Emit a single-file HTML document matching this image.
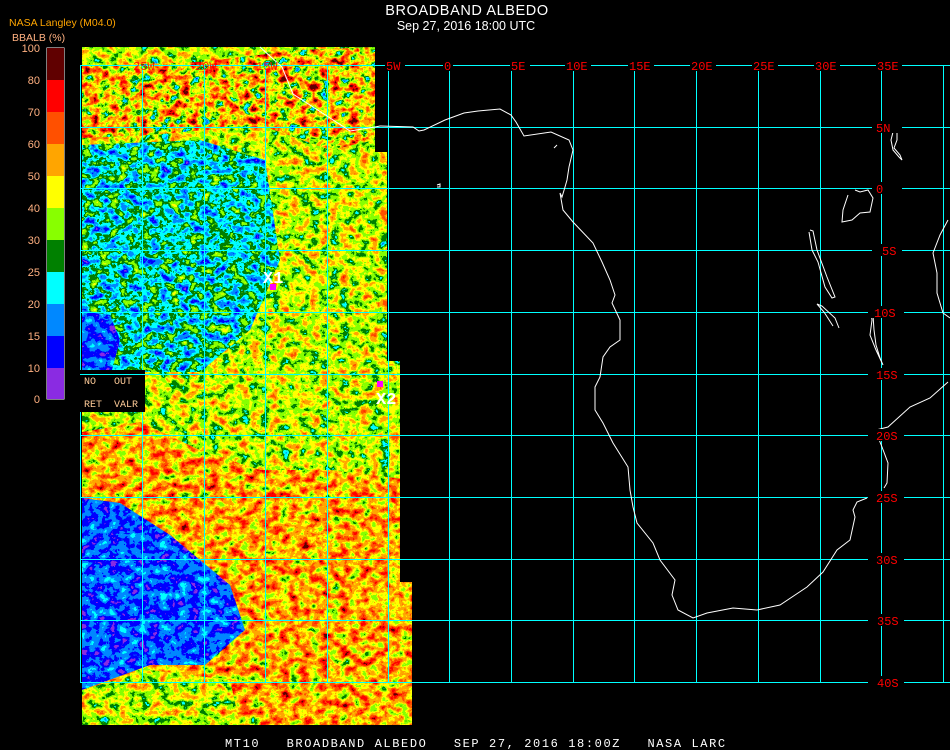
<!DOCTYPE html>
<html><head><meta charset="utf-8"><style>
html,body{margin:0;padding:0;background:#000;}
body{width:950px;height:750px;overflow:hidden;position:relative;}
svg{position:absolute;left:0;top:0;}
</style></head><body>
<svg width="950" height="750" viewBox="0 0 950 750" xmlns="http://www.w3.org/2000/svg">
<defs>
<filter id="t50" x="0" y="0" width="950" height="750" filterUnits="userSpaceOnUse" color-interpolation-filters="sRGB">
<feTurbulence type="fractalNoise" baseFrequency="0.1 0.12" numOctaves="4" seed="3"/>
<feColorMatrix type="matrix" values="0.75 0 0 0 0.17  0.75 0 0 0 0.17  0.75 0 0 0 0.17  0 0 0 0 1"/>
<feComponentTransfer>
<feFuncR type="discrete" tableValues="0.54 0 0 0 0 0.53 1 1 1 1 0.38"/>
<feFuncG type="discrete" tableValues="0.17 0 0.53 1 0.5 1 1 0.65 0.31 0 0"/>
<feFuncB type="discrete" tableValues="0.89 1 1 1 0 0 0 0 0 0 0"/>
</feComponentTransfer>
</filter>
<filter id="t63" x="0" y="0" width="950" height="750" filterUnits="userSpaceOnUse" color-interpolation-filters="sRGB">
<feTurbulence type="fractalNoise" baseFrequency="0.1 0.12" numOctaves="4" seed="4"/>
<feColorMatrix type="matrix" values="1.2 0 0 0 0.02  1.2 0 0 0 0.02  1.2 0 0 0 0.02  0 0 0 0 1"/>
<feComponentTransfer>
<feFuncR type="discrete" tableValues="0.54 0 0 0 0 0.53 1 1 1 1 0.38"/>
<feFuncG type="discrete" tableValues="0.17 0 0.53 1 0.5 1 1 0.65 0.31 0 0"/>
<feFuncB type="discrete" tableValues="0.89 1 1 1 0 0 0 0 0 0 0"/>
</feComponentTransfer>
</filter>
<filter id="t68" x="0" y="0" width="950" height="750" filterUnits="userSpaceOnUse" color-interpolation-filters="sRGB">
<feTurbulence type="fractalNoise" baseFrequency="0.1 0.12" numOctaves="4" seed="5"/>
<feColorMatrix type="matrix" values="0.8 0 0 0 0.27  0.8 0 0 0 0.27  0.8 0 0 0 0.27  0 0 0 0 1"/>
<feComponentTransfer>
<feFuncR type="discrete" tableValues="0.54 0 0 0 0 0.53 1 1 1 1 0.38"/>
<feFuncG type="discrete" tableValues="0.17 0 0.53 1 0.5 1 1 0.65 0.31 0 0"/>
<feFuncB type="discrete" tableValues="0.89 1 1 1 0 0 0 0 0 0 0"/>
</feComponentTransfer>
</filter>
<filter id="t33" x="0" y="0" width="950" height="750" filterUnits="userSpaceOnUse" color-interpolation-filters="sRGB">
<feTurbulence type="fractalNoise" baseFrequency="0.1 0.12" numOctaves="4" seed="7"/>
<feColorMatrix type="matrix" values="0.75 0 0 0 -0.03  0.75 0 0 0 -0.03  0.75 0 0 0 -0.03  0 0 0 0 1"/>
<feComponentTransfer>
<feFuncR type="discrete" tableValues="0.54 0 0 0 0 0.53 1 1 1 1 0.38"/>
<feFuncG type="discrete" tableValues="0.17 0 0.53 1 0.5 1 1 0.65 0.31 0 0"/>
<feFuncB type="discrete" tableValues="0.89 1 1 1 0 0 0 0 0 0 0"/>
</feComponentTransfer>
</filter>
<filter id="t17" x="0" y="0" width="950" height="750" filterUnits="userSpaceOnUse" color-interpolation-filters="sRGB">
<feTurbulence type="fractalNoise" baseFrequency="0.1 0.12" numOctaves="4" seed="9"/>
<feColorMatrix type="matrix" values="0.45 0 0 0 -0.04  0.45 0 0 0 -0.04  0.45 0 0 0 -0.04  0 0 0 0 1"/>
<feComponentTransfer>
<feFuncR type="discrete" tableValues="0.54 0 0 0 0 0.53 1 1 1 1 0.38"/>
<feFuncG type="discrete" tableValues="0.17 0 0.53 1 0.5 1 1 0.65 0.31 0 0"/>
<feFuncB type="discrete" tableValues="0.89 1 1 1 0 0 0 0 0 0 0"/>
</feComponentTransfer>
</filter>
<clipPath id="cimg"><polygon points="82,47 375,47 375,152 387,152 387,361 400,361 400,582 412,582 412,725 82,725"/></clipPath>
<clipPath id="cred"><polygon points="82,66 200,62 300,50 375,47 375,140 330,150 260,125 150,135 82,138"/></clipPath>
<clipPath id="ccyan"><polygon points="82,145 200,140 265,160 280,260 250,330 200,372 82,372"/></clipPath>
<clipPath id="cblue1"><polygon points="82,310 110,315 120,340 112,370 82,370"/></clipPath>
<clipPath id="corange"><polygon points="82,432 140,422 200,450 260,470 330,470 412,480 412,725 82,725"/></clipPath>
<clipPath id="cblue2"><polygon points="82,498 120,503 170,535 230,585 245,630 205,665 150,665 82,690"/></clipPath>
<clipPath id="cmixlow"><polygon points="82,690 150,670 230,680 240,725 82,725"/></clipPath>
</defs>

<g clip-path="url(#cimg)">
<rect x="82" y="47" width="330" height="678" filter="url(#t50)"/>
</g>
<g clip-path="url(#cred)"><rect x="82" y="47" width="330" height="120" filter="url(#t63)"/></g>
<g clip-path="url(#ccyan)"><rect x="82" y="140" width="210" height="235" filter="url(#t33)"/></g>
<g clip-path="url(#cblue1)"><rect x="82" y="300" width="50" height="75" filter="url(#t17)"/></g>
<g clip-path="url(#cimg)"><g clip-path="url(#corange)"><rect x="82" y="420" width="330" height="305" filter="url(#t68)"/></g></g>
<g clip-path="url(#cblue2)"><rect x="82" y="495" width="170" height="200" filter="url(#t17)"/></g>
<g clip-path="url(#cmixlow)"><rect x="82" y="665" width="160" height="60" filter="url(#t50)"/></g>

<!-- grid -->
<g stroke="#00ffff" stroke-width="1" shape-rendering="crispEdges">
<line x1="80" y1="65.5" x2="950" y2="65.5"/>
<line x1="80" y1="127.5" x2="950" y2="127.5"/>
<line x1="80" y1="188.5" x2="950" y2="188.5"/>
<line x1="80" y1="250.5" x2="950" y2="250.5"/>
<line x1="80" y1="312.5" x2="950" y2="312.5"/>
<line x1="80" y1="374.5" x2="950" y2="374.5"/>
<line x1="80" y1="435.5" x2="950" y2="435.5"/>
<line x1="80" y1="497.5" x2="950" y2="497.5"/>
<line x1="80" y1="559.5" x2="950" y2="559.5"/>
<line x1="80" y1="620.5" x2="950" y2="620.5"/>
<line x1="80" y1="682.5" x2="950" y2="682.5"/>
<line x1="80.5" y1="65" x2="80.5" y2="683"/>
<line x1="142.5" y1="65" x2="142.5" y2="683"/>
<line x1="204.5" y1="65" x2="204.5" y2="683"/>
<line x1="265.5" y1="65" x2="265.5" y2="683"/>
<line x1="327.5" y1="65" x2="327.5" y2="683"/>
<line x1="388.5" y1="65" x2="388.5" y2="683"/>
<line x1="449.5" y1="65" x2="449.5" y2="683"/>
<line x1="511.5" y1="65" x2="511.5" y2="683"/>
<line x1="573.5" y1="65" x2="573.5" y2="683"/>
<line x1="634.5" y1="65" x2="634.5" y2="683"/>
<line x1="696.5" y1="65" x2="696.5" y2="683"/>
<line x1="758.5" y1="65" x2="758.5" y2="683"/>
<line x1="820.5" y1="65" x2="820.5" y2="683"/>
<line x1="881.5" y1="65" x2="881.5" y2="683"/>
<line x1="943.5" y1="65" x2="943.5" y2="683"/>
</g>

<!-- coastlines -->
<g fill="none" stroke="#fff" stroke-width="1">
<polyline points="260,47 282,67 293,94 327,116 350,131 375,127 380,126 413,127 419,131 424,130 445,120 464,113 478,111 500,109 511,115 516,122 524,136 551,132 569,140 573,150 569,167 567,180 565,187 562,197 560,193 563,210 573,222 593,243 602,262 610,280 615,295 612,303 620,320 620,340 610,347 603,357 600,377 595,387 595,410 603,423 613,443 628,467 630,490 633,507 637,523 653,543 660,560 675,580 672,595 678,610 693,618 707,613 733,608 757,610 780,605 807,587 823,572 837,550 850,540 855,517 853,510 857,502 867,498"/>
<polyline points="878,437 882,447 888,463 887,483 884,488"/>
<polyline points="876,430 888,427 910,407 930,398 948,382"/>
<polyline points="810,230 813,231 817,250 827,277 835,297 832,298 825,287 818,262 812,250 809,232"/>
<polyline points="870,307 872,320 870,335 876,350 883,365 880,358 876,345 874,330 873,315"/>
<polyline points="848,195 843,210 842,222 852,220 860,213 870,212 873,198 868,190 860,192 855,190"/>
<polyline points="893,132 897,132 897,140 894,148 900,155 902,160 899,157 893,150 891,140 893,132"/>
<polyline points="948,220 940,235 933,253 937,273 937,293 943,313 950,318"/>
<polyline points="839,328 835,318 822,306 817,304 824,312 833,326"/>
<polyline points="437,185 440,184 440,187 437,187"/>
<polyline points="557,145 554,148"/>
</g>

<!-- grid labels -->
<g font-family="Liberation Mono, monospace" font-size="12" fill="#ff0000">
<rect x="385" y="60" width="20" height="11" fill="#000"/><text x="386" y="70">5W</text>
<rect x="443" y="60" width="10" height="11" fill="#000"/><text x="444" y="70">0</text>
<rect x="510" y="60" width="20" height="11" fill="#000"/><text x="511" y="70">5E</text>
<rect x="565" y="60" width="26" height="11" fill="#000"/><text x="566" y="70">10E</text>
<rect x="628" y="60" width="26" height="11" fill="#000"/><text x="629" y="70">15E</text>
<rect x="690" y="60" width="26" height="11" fill="#000"/><text x="691" y="70">20E</text>
<rect x="752" y="60" width="26" height="11" fill="#000"/><text x="753" y="70">25E</text>
<rect x="814" y="60" width="26" height="11" fill="#000"/><text x="815" y="70">30E</text>
<rect x="876" y="60" width="26" height="11" fill="#000"/><text x="877" y="70">35E</text>
<text x="133" y="70" opacity="0.85">25W</text>
<text x="195" y="70" opacity="0.85">20W</text>
<text x="256" y="70" opacity="0.85">15W</text>
<rect x="872" y="121" width="30" height="12" fill="#000"/><text x="876" y="132">5N</text>
<rect x="872" y="182" width="30" height="12" fill="#000"/><text x="876" y="193">0</text>
<rect x="872" y="244" width="30" height="12" fill="#000"/><text x="882" y="255">5S</text>
<rect x="868" y="306" width="36" height="12" fill="#000"/><text x="874" y="317">10S</text>
<rect x="868" y="368" width="36" height="12" fill="#000"/><text x="876" y="379">15S</text>
<rect x="868" y="429" width="36" height="12" fill="#000"/><text x="876" y="440">20S</text>
<rect x="868" y="491" width="36" height="12" fill="#000"/><text x="876" y="502">25S</text>
<rect x="868" y="553" width="36" height="12" fill="#000"/><text x="876" y="564">30S</text>
<rect x="868" y="614" width="36" height="12" fill="#000"/><text x="877" y="625">35S</text>
<rect x="868" y="676" width="36" height="12" fill="#000"/><text x="877" y="687">40S</text>
</g>

<!-- markers -->
<rect x="270" y="284" width="6" height="6" fill="#ff00ff"/>
<rect x="377" y="381" width="6" height="6" fill="#ff00ff"/>
<g font-family="Liberation Mono, monospace" font-size="17" fill="#fff" font-weight="bold">
<text x="263" y="283">X1</text>
<text x="376" y="404">X2</text>
</g>

<!-- NO OUT box -->
<rect x="80" y="370" width="65" height="42" fill="#000"/>
<line x1="80" y1="374.5" x2="145" y2="374.5" stroke="#00ffff"/>
<g font-family="Liberation Mono, monospace" font-size="10" fill="#ffcc99">
<text x="84" y="384">NO</text><text x="114" y="384">OUT</text>
<text x="84" y="407">RET</text><text x="114" y="407">VALR</text>
</g>

<!-- legend -->
<text x="9" y="26" font-family="Liberation Sans, sans-serif" font-size="10.5" fill="#ffa500">NASA Langley (M04.0)</text>
<text x="12" y="41" font-family="Liberation Sans, sans-serif" font-size="10.5" fill="#ffb080">BBALB (%)</text>
<rect x="46.5" y="47.5" width="18" height="352" fill="#fff"/>
<g shape-rendering="crispEdges">
<rect x="47" y="48" width="17" height="32" fill="#600000"/>
<rect x="47" y="80" width="17" height="32" fill="#ff0000"/>
<rect x="47" y="112" width="17" height="32" fill="#ff5000"/>
<rect x="47" y="144" width="17" height="32" fill="#ffa500"/>
<rect x="47" y="176" width="17" height="32" fill="#ffff00"/>
<rect x="47" y="208" width="17" height="32" fill="#88ff00"/>
<rect x="47" y="240" width="17" height="32" fill="#008000"/>
<rect x="47" y="272" width="17" height="32" fill="#00ffff"/>
<rect x="47" y="304" width="17" height="32" fill="#0088ff"/>
<rect x="47" y="336" width="17" height="32" fill="#0000ff"/>
<rect x="47" y="368" width="17" height="31" fill="#8a2be2"/>
</g>
<g font-family="Liberation Sans, sans-serif" font-size="11" fill="#ffb080" text-anchor="end">
<text x="40" y="52">100</text>
<text x="40" y="84">80</text>
<text x="40" y="116">70</text>
<text x="40" y="148">60</text>
<text x="40" y="180">50</text>
<text x="40" y="212">40</text>
<text x="40" y="244">30</text>
<text x="40" y="276">25</text>
<text x="40" y="308">20</text>
<text x="40" y="340">15</text>
<text x="40" y="372">10</text>
<text x="40" y="403">0</text>
</g>

<!-- titles -->
<text x="467" y="15" text-anchor="middle" font-family="Liberation Sans, sans-serif" font-size="14.5" fill="#fff" letter-spacing="0.6">BROADBAND ALBEDO</text>
<text x="466" y="30" text-anchor="middle" font-family="Liberation Sans, sans-serif" font-size="12.5" fill="#fff">Sep 27, 2016 18:00 UTC</text>
<text x="225" y="747" font-family="Liberation Mono, monospace" font-size="12" fill="#fff" letter-spacing="1.6" xml:space="preserve">MT10   BROADBAND ALBEDO   SEP 27, 2016 18:00Z   NASA LARC</text>
</svg>
</body></html>
